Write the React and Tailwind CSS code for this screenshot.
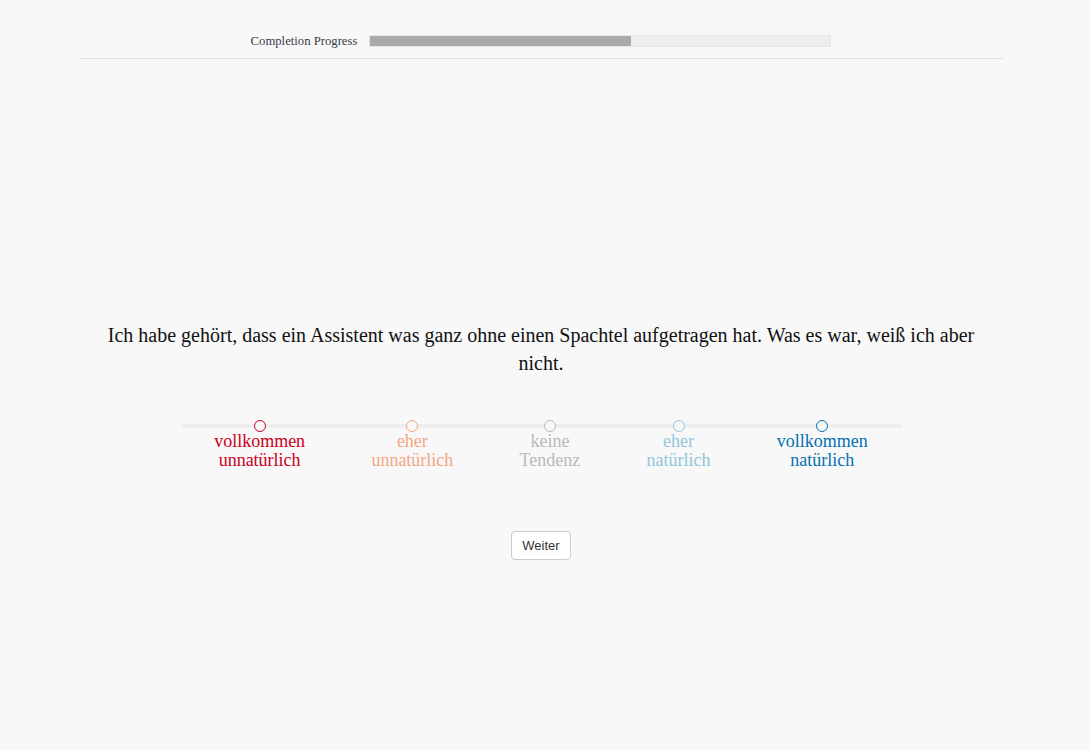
import React from "react";

const options = [
  { l1: "vollkommen", l2: "unnatürlich", c: "text-[#ca0020]", b: "border-[#ca0020]" },
  { l1: "eher", l2: "unnatürlich", c: "text-[#f4a582]", b: "border-[#f4a582]" },
  { l1: "keine", l2: "Tendenz", c: "text-[#bababa]", b: "border-[#bababa]" },
  { l1: "eher", l2: "natürlich", c: "text-[#92c5de]", b: "border-[#92c5de]" },
  { l1: "vollkommen", l2: "natürlich", c: "text-[#0571b0]", b: "border-[#0571b0]" },
];

export default function App() {
  return (
    <div className="min-h-[750px] w-full bg-[#f8f8f8]">
      <div className="w-[1082px] flex flex-col items-center" style={{ fontFamily: '"Liberation Serif", "Times New Roman", serif' }}>
        <div className="w-[924px] border-b border-[#e2e2e2] pt-[35px] pb-[11px] flex justify-center items-center gap-[12px]">
          <span className="text-[12.7px] leading-[12px] text-[#3a3a4a]">Completion Progress</span>
          <div className="w-[462px] h-[12px] bg-[#eeeeee] border border-[#e6e6e6] flex">
            <div className="w-[261px] h-full bg-[#aaaaaa]" />
          </div>
        </div>
        <div className="mt-[262px] w-[870px] text-center text-[20px] leading-[28px] text-[#111]">
          Ich habe gehört, dass ein Assistent was ganz ohne einen Spachtel aufgetragen hat. Was es war, weiß ich aber nicht.
        </div>
        <div className="relative mt-[44px] w-[720px]">
          <div className="absolute left-0 right-0 top-[3px] h-[4px] bg-[#eeeeee]" />
          <div className="relative flex justify-around">
            {options.map((o, i) => (
              <div key={i} className="flex flex-col items-center">
                <div className={`w-[12px] h-[12px] rounded-full border-[1.5px] bg-[#f8f8f8] ${o.b} -mt-[1px]`} />
                <div className={`text-center text-[18px] leading-[19px] ${o.c}`}>
                  <div>{o.l1}</div>
                  <div>{o.l2}</div>
                </div>
              </div>
            ))}
          </div>
        </div>
        <button
          className="mt-[61px] w-[60px] h-[29px] bg-white border border-[#cccccc] rounded-[4px] text-[13px] text-[#333]"
          style={{ fontFamily: '"Liberation Sans", Arial, sans-serif' }}
        >
          Weiter
        </button>
      </div>
    </div>
  );
}
